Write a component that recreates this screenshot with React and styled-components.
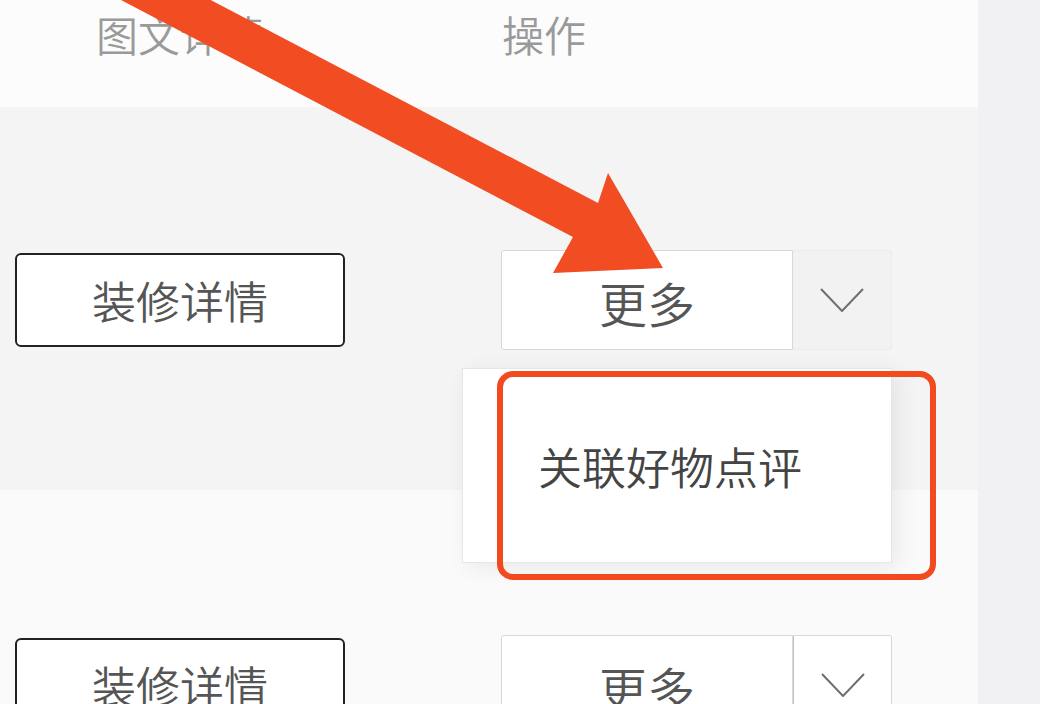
import styled, { createGlobalStyle } from "styled-components";

const GlobalStyle = createGlobalStyle`
    html, body {
        margin: 0;
        padding: 0;
        overflow: hidden;
    }
    body {
        font-family: "Noto Sans CJK SC", "Noto Sans", sans-serif;
        font-weight: 350;
        background: #f1f1f3;
    }
`;

const rows = [
    { id: 1, height: 383, open: true },
    { id: 2, height: 386, open: false },
];

export default function App(){

    return(
        <Page>
            <GlobalStyle />
            <Table>
                <HeadRow>
                    <HeadCell center>图文详情</HeadCell>
                    <HeadCell>操作</HeadCell>
                </HeadRow>

                {rows.map((row) => (
                    <Row key={row.id} height={row.height} shade={row.open}>
                        <DetailButton>装修详情</DetailButton>

                        <Actions>
                            <MoreButton>更多</MoreButton>
                            <Toggle open={row.open}>
                                <svg width="44" height="24" viewBox="0 0 44 24">
                                    <polyline points="1,1 22,23 43,1" fill="none" stroke="#6f6f6f" strokeWidth="2" />
                                </svg>
                            </Toggle>

                            {row.open && (
                                <Menu>
                                    <MenuItem>关联好物点评</MenuItem>
                                </Menu>
                            )}
                        </Actions>
                    </Row>
                ))}
            </Table>
            <Side />

            <Highlight />
            <Pointer width="1040" height="704" viewBox="0 0 1040 704">
                <path
                    d="M142,-36 L598,203 L608,173 L663,268 L553,273 L573,237 L121,0 L100,-20 Z"
                    fill="#f14c22"
                />
            </Pointer>
        </Page>
    );
}

const Page = styled.div`
    position: relative;
    width: 1040px;
    height: 704px;
    display: flex;
    overflow: hidden;
`;

const Table = styled.div`
    width: 978px;
    display: flex;
    flex-direction: column;
`;

const Side = styled.div`
    flex: 1;
    background: #f1f1f3;
`;

const HeadRow = styled.div`
    height: 107px;
    flex-shrink: 0;
    box-sizing: border-box;
    padding: 6px 0 0 15px;
    display: grid;
    grid-template-columns: 330px 391px;
    column-gap: 156px;
    background: #fcfcfc;
`;

const HeadCell = styled.div`
    font-size: 42px;
    line-height: 56px;
    color: #9a9a9a;
    text-align: ${(p) => (p.center ? "center" : "left")};
    padding-left: ${(p) => (p.center ? "0" : "1px")};
`;

const Row = styled.div`
    height: ${(p) => p.height}px;
    flex-shrink: 0;
    box-sizing: border-box;
    padding: 3px 0 0 15px;
    display: grid;
    grid-template-columns: 330px 391px;
    column-gap: 156px;
    align-items: center;
    background: ${(p) => (p.shade ? "#f4f4f5" : "#fafafa")};
    position: relative;
    z-index: ${(p) => (p.shade ? 2 : 1)};
`;

const DetailButton = styled.div`
    height: 94px;
    box-sizing: border-box;
    border: 2px solid #222;
    border-radius: 6px;
    background: #ffffff;
    display: flex;
    justify-content: center;
    align-items: center;
    font-size: 44px;
    color: #555;
`;

const Actions = styled.div`
    position: relative;
    height: 100px;
    display: flex;
`;

const MoreButton = styled.div`
    width: 292px;
    box-sizing: border-box;
    border: 1px solid #d8d8d8;
    border-radius: 3px 0 0 3px;
    background: #ffffff;
    display: flex;
    justify-content: center;
    align-items: center;
    padding-top: 4px;
    font-size: 48px;
    color: #555;
`;

const Toggle = styled.div`
    flex: 1;
    box-sizing: border-box;
    border: 1px solid ${(p) => (p.open ? "#ececec" : "#d8d8d8")};
    border-left: ${(p) => (p.open ? "none" : "1px solid #c4c4c4")};
    border-radius: 0 3px 3px 0;
    background: ${(p) => (p.open ? "#f2f2f2" : "#ffffff")};
    display: flex;
    justify-content: center;
    align-items: center;
`;

const Menu = styled.div`
    position: absolute;
    left: -39px;
    top: 118px;
    width: 430px;
    height: 195px;
    box-sizing: border-box;
    background: #ffffff;
    border: 1px solid #e6e6e6;
    box-shadow: 6px 4px 22px rgba(0, 0, 0, 0.07);
    display: flex;
    align-items: center;
`;

const MenuItem = styled.div`
    padding-left: 75px;
    font-size: 44px;
    color: #444;
`;

const Highlight = styled.div`
    position: absolute;
    left: 497px;
    top: 371px;
    width: 439px;
    height: 209px;
    box-sizing: border-box;
    border: 6px solid #f2491e;
    border-radius: 16px;
    z-index: 5;
`;

const Pointer = styled.svg`
    position: absolute;
    left: 0;
    top: 0;
    z-index: 6;
    pointer-events: none;
`;
